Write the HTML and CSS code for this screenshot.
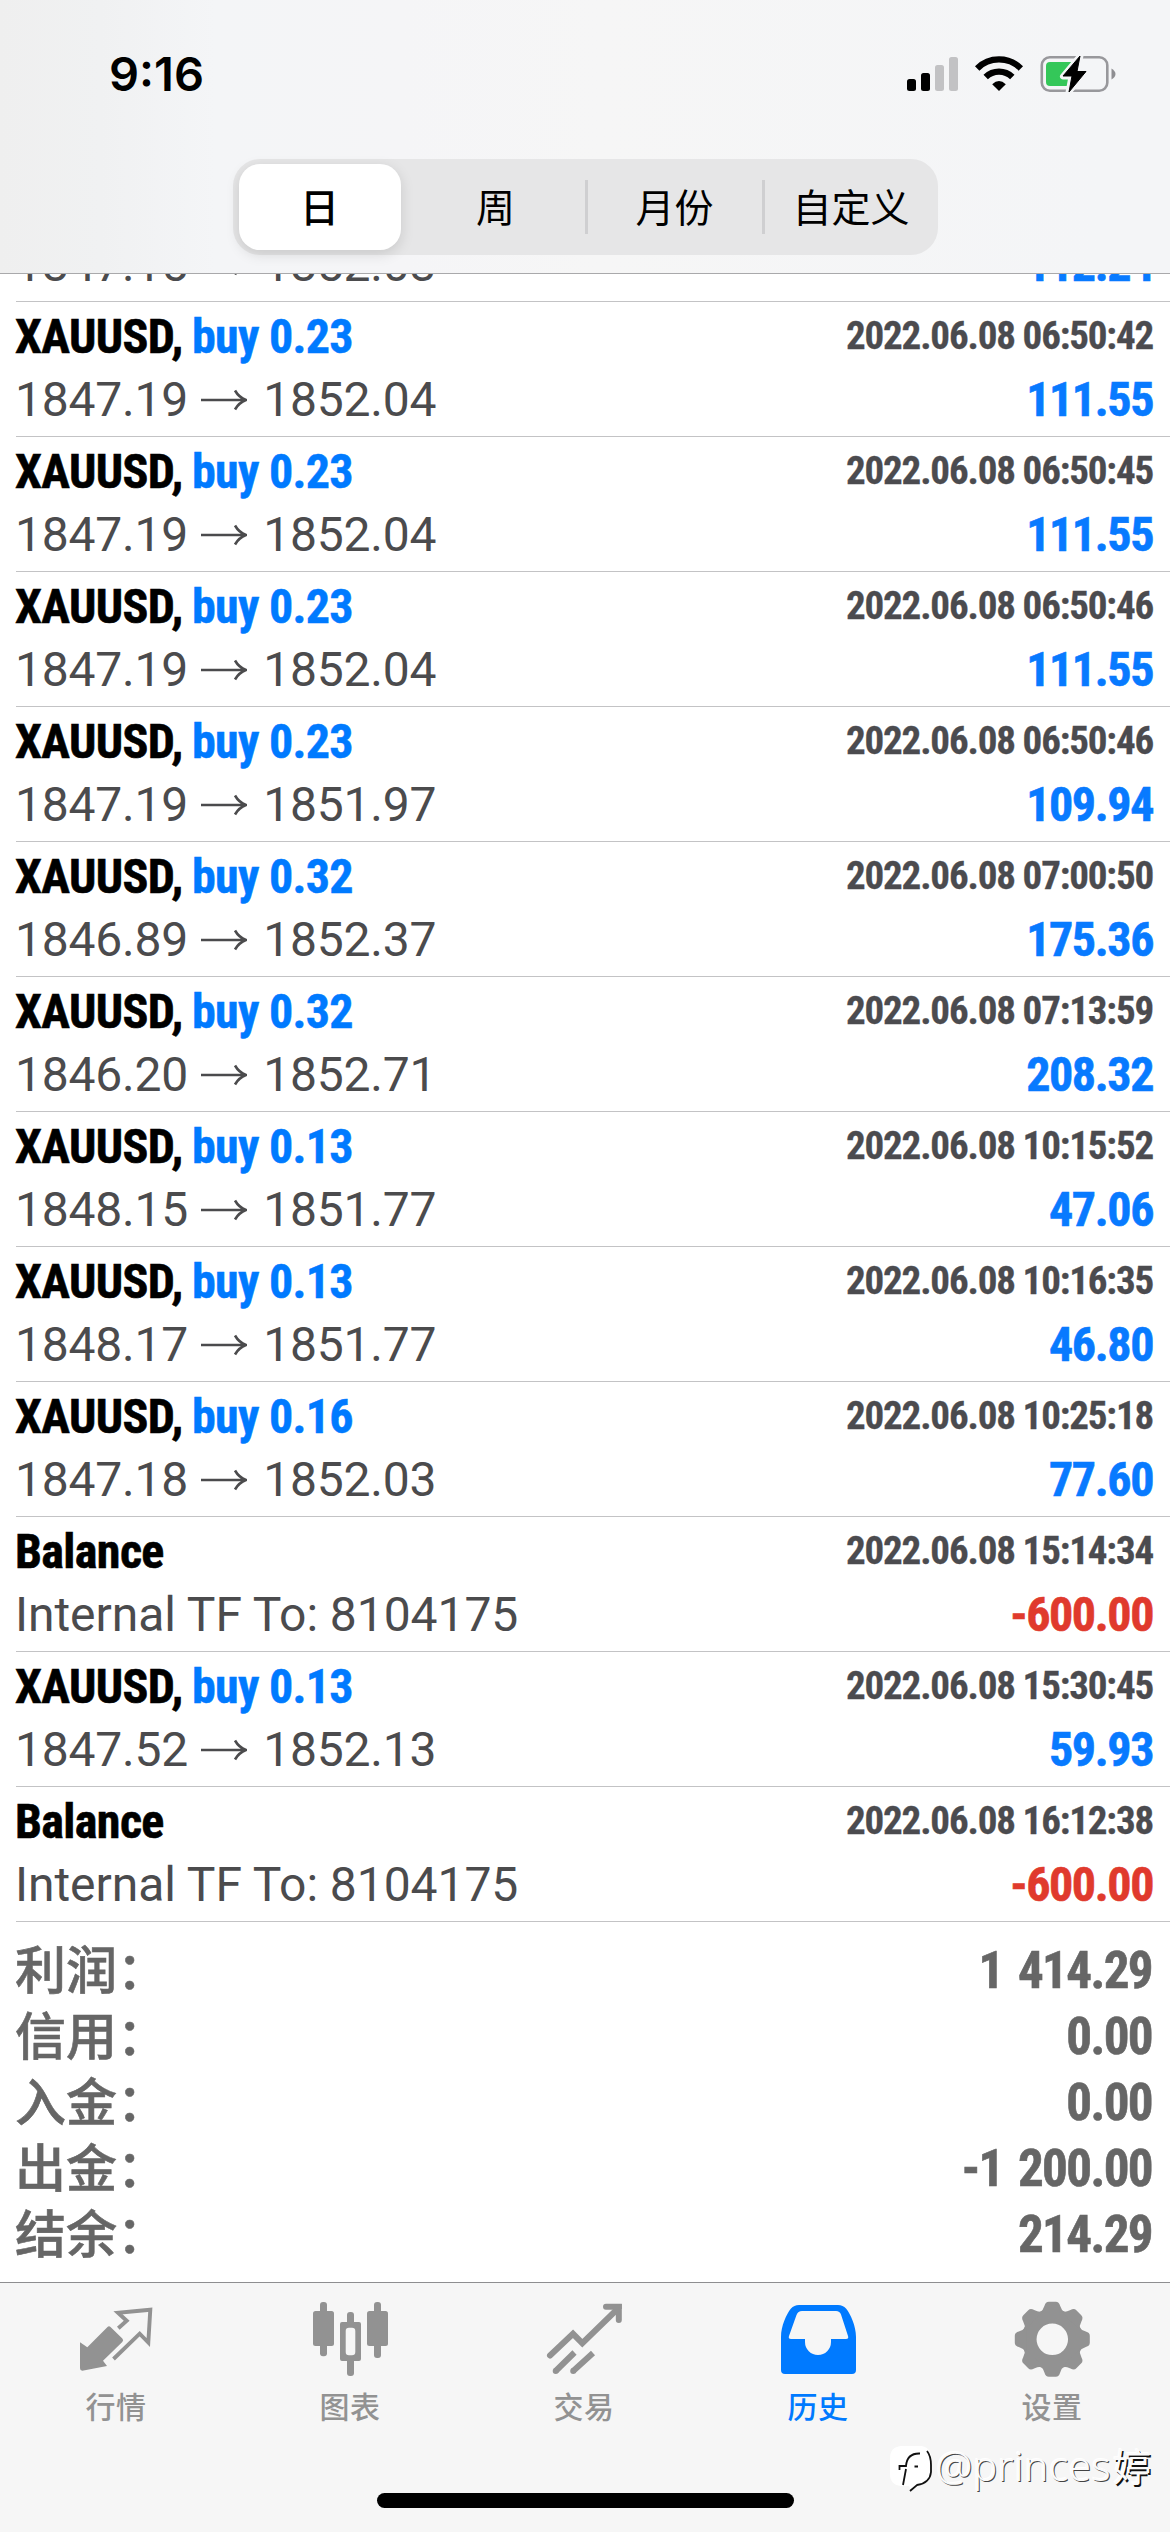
FILE: index.html
```html
<!DOCTYPE html>
<html lang="zh-CN">
<head>
<meta charset="utf-8">
<title>历史</title>
<link rel="stylesheet" href="styles.css">
</head>
<body>
<svg width="0" height="0" class="defs">
  <symbol id="arrow" viewBox="0 0 46 24"><path d="M0 12H45M34 2.500Q38 9.500 45 12Q38 14.500 34 21.500" fill="none" stroke="currentColor" stroke-width="2.600"/></symbol>
</svg>
<div class="screen">
  <header class="top">
    <div class="status">
      <span class="clock">9:16</span>
      <svg class="status-icons" width="210" height="40" viewBox="906 54 210 40">
        <g><rect x="907" y="79" width="9" height="12" rx="2.500"/><rect x="921" y="73" width="9" height="18" rx="2.500"/></g>
        <g fill="#c2c2c4"><rect x="935" y="65" width="9" height="26" rx="2.500"/><rect x="949" y="57" width="9" height="34" rx="2.500"/></g>
        <g fill="none" stroke="#000" stroke-width="6.300"><path d="M977.200 68.400A31 31 0 0 1 1020.800 68.400"/><path d="M985.700 77A19 19 0 0 1 1012.300 77"/></g>
        <path d="M999 91L992.200 84.200Q999 78 1005.800 84.200Z"/>
        <rect x="1041.800" y="57.300" width="65.500" height="33.400" rx="8" fill="none" stroke="#98989c" stroke-width="2.600"/>
        <path d="M1111.500 68.500Q1115.500 71 1115.500 74T1111.500 79.500Z" fill="#8e8e92"/>
        <path d="M1050 62H1071V86H1050Q1046 86 1046 82V66Q1046 62 1050 62Z" fill="#34c759"/>
        <path d="M1080.500 55.500L1063 76.500H1071.500L1068.500 92.500L1086 71H1077.500Z" stroke="#f4f5f7" stroke-width="6" stroke-linejoin="round"/>
        <path d="M1080 56L1063 76H1072L1069 92L1086 71.500H1077Z" stroke="#000" stroke-width="1" stroke-linejoin="round"/>
      </svg>
    </div>
    <div class="segments">
      <div class="segment selected">日</div>
      <div class="segment next">周</div>
      <div class="segment divided">月份</div>
      <div class="segment divided">自定义</div>
    </div>
  </header>

  <main class="content">
    <div class="row cut">
      <div class="line detail"><span class="prices">1847.15<svg class="arrow"><use href="#arrow"/></svg>1852.03</span><span class="amount">112.24</span></div>
    </div>
    <div class="row">
      <div class="line"><span class="title">XAUUSD,</span><span class="side">buy 0.23</span><span class="date">2022.06.08 06:50:42</span></div>
      <div class="line detail"><span class="prices">1847.19<svg class="arrow"><use href="#arrow"/></svg>1852.04</span><span class="amount">111.55</span></div>
    </div>
    <div class="row">
      <div class="line"><span class="title">XAUUSD,</span><span class="side">buy 0.23</span><span class="date">2022.06.08 06:50:45</span></div>
      <div class="line detail"><span class="prices">1847.19<svg class="arrow"><use href="#arrow"/></svg>1852.04</span><span class="amount">111.55</span></div>
    </div>
    <div class="row">
      <div class="line"><span class="title">XAUUSD,</span><span class="side">buy 0.23</span><span class="date">2022.06.08 06:50:46</span></div>
      <div class="line detail"><span class="prices">1847.19<svg class="arrow"><use href="#arrow"/></svg>1852.04</span><span class="amount">111.55</span></div>
    </div>
    <div class="row">
      <div class="line"><span class="title">XAUUSD,</span><span class="side">buy 0.23</span><span class="date">2022.06.08 06:50:46</span></div>
      <div class="line detail"><span class="prices">1847.19<svg class="arrow"><use href="#arrow"/></svg>1851.97</span><span class="amount">109.94</span></div>
    </div>
    <div class="row">
      <div class="line"><span class="title">XAUUSD,</span><span class="side">buy 0.32</span><span class="date">2022.06.08 07:00:50</span></div>
      <div class="line detail"><span class="prices">1846.89<svg class="arrow"><use href="#arrow"/></svg>1852.37</span><span class="amount">175.36</span></div>
    </div>
    <div class="row">
      <div class="line"><span class="title">XAUUSD,</span><span class="side">buy 0.32</span><span class="date">2022.06.08 07:13:59</span></div>
      <div class="line detail"><span class="prices">1846.20<svg class="arrow"><use href="#arrow"/></svg>1852.71</span><span class="amount">208.32</span></div>
    </div>
    <div class="row">
      <div class="line"><span class="title">XAUUSD,</span><span class="side">buy 0.13</span><span class="date">2022.06.08 10:15:52</span></div>
      <div class="line detail"><span class="prices">1848.15<svg class="arrow"><use href="#arrow"/></svg>1851.77</span><span class="amount">47.06</span></div>
    </div>
    <div class="row">
      <div class="line"><span class="title">XAUUSD,</span><span class="side">buy 0.13</span><span class="date">2022.06.08 10:16:35</span></div>
      <div class="line detail"><span class="prices">1848.17<svg class="arrow"><use href="#arrow"/></svg>1851.77</span><span class="amount">46.80</span></div>
    </div>
    <div class="row">
      <div class="line"><span class="title">XAUUSD,</span><span class="side">buy 0.16</span><span class="date">2022.06.08 10:25:18</span></div>
      <div class="line detail"><span class="prices">1847.18<svg class="arrow"><use href="#arrow"/></svg>1852.03</span><span class="amount">77.60</span></div>
    </div>
    <div class="row">
      <div class="line"><span class="title">Balance</span><span class="date">2022.06.08 15:14:34</span></div>
      <div class="line detail"><span class="prices note">Internal TF To: 8104175</span><span class="amount loss">-600.00</span></div>
    </div>
    <div class="row">
      <div class="line"><span class="title">XAUUSD,</span><span class="side">buy 0.13</span><span class="date">2022.06.08 15:30:45</span></div>
      <div class="line detail"><span class="prices">1847.52<svg class="arrow"><use href="#arrow"/></svg>1852.13</span><span class="amount">59.93</span></div>
    </div>
    <div class="row">
      <div class="line"><span class="title">Balance</span><span class="date">2022.06.08 16:12:38</span></div>
      <div class="line detail"><span class="prices note">Internal TF To: 8104175</span><span class="amount loss">-600.00</span></div>
    </div>

    <div class="totals">
      <div class="total"><span class="label">利润：</span><span>1 414.29</span></div>
      <div class="total"><span class="label">信用：</span><span>0.00</span></div>
      <div class="total"><span class="label">入金：</span><span>0.00</span></div>
      <div class="total"><span class="label">出金：</span><span>-1 200.00</span></div>
      <div class="total"><span class="label">结余：</span><span>214.29</span></div>
    </div>
  </main>

  <footer class="bottom">
    <nav class="tabs">
      <div class="tab">
        <svg width="84" height="78" viewBox="0 0 84 78"><path d="M5 42.300L12.300 47.300L32.500 27Q34 25.500 35.500 27L47.300 38.500Q49 40.300 47.300 42L28 60.700L32 66L7.300 70.700Q5 70.700 5 68.300Z" fill="currentColor"/><path d="M43.300 28.300L51.700 20.700L43 12.700L75.300 9.700L73.300 42.500L64.700 33.700L38.500 59" fill="none" stroke="currentColor" stroke-width="3.900"/></svg>
        <span>行情</span>
      </div>
      <div class="tab">
        <svg width="84" height="78" viewBox="0 0 84 78" fill="currentColor"><rect x="11" y="2" width="7" height="54.300" rx="3"/><rect x="4" y="11" width="21" height="35" rx="2.500"/><rect x="65" y="2" width="7" height="56" rx="3"/><rect x="58" y="11" width="21" height="35" rx="2.500"/><rect x="38" y="12" width="7" height="14" rx="3"/><rect x="38" y="58" width="7" height="18" rx="3"/><path fill-rule="evenodd" d="M33 22H50Q52 22 52 24V59Q52 61 50 61H33Q31 61 31 59V24Q31 22 33 22ZM40 27.700Q36.700 27.700 36.700 31V52Q36.700 55.300 40 55.300H43Q46.300 55.300 46.300 52V31Q46.300 27.700 43 27.700Z"/></svg>
        <span>图表</span>
      </div>
      <div class="tab">
        <svg width="84" height="78" viewBox="0 0 84 78" fill="none" stroke="currentColor" stroke-width="6"><path d="M7 55.500L30 33.800L39.300 43.200L75 8.500" stroke-linecap="round"/><path d="M63 6.800H75.800V20" stroke-linecap="round"/><path d="M73 4H78.800V9H73Z" fill="currentColor" stroke="none"/><path d="M12.700 71L31.500 52.500M30.200 71L50 53"/><path d="M12.700 71v.01M30.200 71v.01" stroke-linecap="round"/></svg>
        <span>交易</span>
      </div>
      <div class="tab active">
        <svg width="84" height="78" viewBox="0 0 84 78" fill="currentColor"><path fill-rule="evenodd" d="M4 70V37C4 26 9.500 14 14 8.500Q17 5 22 5H61Q66 5 69 8.500C73.500 14 79 26 79 37V70Q79 74 75 74H8Q4 74 4 70ZM25 11Q21 11 19.500 15L12 36Q11 39 14 39H28V42A13 13 0 0 0 54 42V39H69Q72 39 71 36L64 14.500Q62.800 11 59 11Z"/></svg>
        <span>历史</span>
      </div>
      <div class="tab">
        <svg width="84" height="78" viewBox="0 0 84 78"><g transform="translate(41.300 39.300)" fill="currentColor"><circle r="23" fill="none" stroke="currentColor" stroke-width="14.500"/><path id="cog" d="M-13-26Q-9-29-7.800-33.500Q-6.700-37.500-3.500-37.500H3.500Q6.700-37.500 7.800-33.500Q9-29 13-26Z"/><use href="#cog" transform="rotate(45)"/><use href="#cog" transform="rotate(90)"/><use href="#cog" transform="rotate(135)"/><use href="#cog" transform="rotate(180)"/><use href="#cog" transform="rotate(225)"/><use href="#cog" transform="rotate(270)"/><use href="#cog" transform="rotate(315)"/></g></svg>
        <span>设置</span>
      </div>
    </nav>
    <div class="home"></div>
    <div class="watermark">
      <svg width="46" height="50" viewBox="0 0 46 50"><path d="M12 1H32Q43 2 43 18V27Q42 38 28 40L22 46L20 41H12Q1 40 1 29V13Q1 2 12 1Z" fill="#fff"/><g fill="none" stroke="#111" stroke-width="1.800"><path d="M38 6Q42 11 42 20V27Q41 38 28 40L21 46"/><path d="M31 8.500Q18 8 17 21H10.500V25M17 24L14 40M25.500 21.500H29"/></g></svg>
      <span class="handle">@princes<b>婷</b></span>
    </div>
  </footer>
</div>
</body>
</html>
```
FILE: styles.css
```css
* { box-sizing: border-box; }
body { margin: 0; background: #fff; }
.defs { position: absolute; }

.screen {
  width: 1170px;
  height: 2532px;
  display: flex;
  flex-direction: column;
  overflow: hidden;
  background: #fff;
  font-family: Roboto, "Noto Sans CJK SC", sans-serif;
}

.top {
  height: 274px;
  display: flex;
  flex-direction: column;
  align-items: center;
  border-bottom: 1px solid #a9a9ab;
  background: linear-gradient(90deg, #efefef 0, #f0f1f2 100px, #f4f5f7 215px, #f5f5f7 400px, #f6f6f6 600px, #f4f5f7 1100px);
}
.status {
  width: 100%;
  height: 159px;
  padding: 54px 54px 0 109px;
  display: flex;
  justify-content: space-between;
  align-items: flex-start;
}
.clock {
  font: 600 47px/40px Inter, sans-serif;
}
.segments {
  width: 705px;
  height: 96px;
  padding: 5px 0 5px 6px;
  display: grid;
  grid-template-columns: 162px 184px 177px 1fr;
  border-radius: 27px;
  background: #e6e6e7;
  font: 400 39px/82px "Noto Sans CJK SC", sans-serif;
}
.segment { display: flex; justify-content: center; }
.segment.selected {
  border-radius: 21px;
  background: #fff;
  font-weight: 500;
  box-shadow: 0 4px 14px rgba(0, 0, 0, .13);
}
.segment.next { padding-left: 6px; }
.segment.divided {
  padding-left: 3px;
  background: linear-gradient(#cfcfd1, #cfcfd1) 0 16px / 3px 54px no-repeat;
}

.content { flex: 1; }
.row {
  height: 135px;
  margin-left: 16px;
  padding: 5px 17px 4px 0;
  border-bottom: 1px solid #c3c3c5;
}
.row.cut {
  height: 28px;
  padding-top: 0;
  display: flex;
  flex-direction: column;
  justify-content: flex-end;
  overflow: hidden;
}
.line {
  height: 60px;
  display: flex;
  align-items: flex-start;
  font: 700 48px/60px Roboto, sans-serif;
  font-stretch: 75%;
  white-space: nowrap;
}
.line.detail { height: 65px; line-height: 65px; flex: none; }
.title {
  width: 177px;
  margin-left: -1px;
  letter-spacing: -.6px;
  color: #000;
  -webkit-text-stroke: .6px;
}
.side { letter-spacing: -.7px; color: #007aff; -webkit-text-stroke: .5px; }
.date {
  margin-left: auto;
  font-size: 39px;
  line-height: 59px;
  letter-spacing: -1.15px;
  color: #4b4b4f;
  -webkit-text-stroke: .3px;
}
.prices {
  margin-left: -1px;
  display: flex;
  align-items: center;
  font-weight: 400;
  font-stretch: 100%;
  letter-spacing: -.2px;
  color: #4b4b4d;
}
.prices.note { letter-spacing: -.05px; }
.arrow { width: 46px; height: 24px; margin: 1px 16px 0 13px; }
.amount {
  margin-left: auto;
  letter-spacing: -1.4px;
  color: #087aff;
  -webkit-text-stroke: .6px;
}
.amount.loss { color: #e03a2d; }

.totals { padding: 16px 18px 0 15px; color: #666; }
.total {
  height: 66px;
  display: flex;
  justify-content: space-between;
  font: 700 51px/66px Roboto, sans-serif;
  font-stretch: 75%;
  letter-spacing: -1.6px;
  word-spacing: 5px;
  -webkit-text-stroke: .6px;
}
.label {
  font: 500 51px/58px "Noto Sans CJK SC", sans-serif;
  letter-spacing: 0;
}

.bottom {
  position: relative;
  height: 250px;
  display: flex;
  flex-direction: column;
  align-items: center;
  border-top: 1px solid #8e8e90;
  background: #f6f6f6;
}
.tabs {
  width: 100%;
  height: 210px;
  padding-top: 17px;
  display: grid;
  grid-template-columns: repeat(5, 1fr);
  color: #929292;
}
.tab {
  display: flex;
  flex-direction: column;
  align-items: center;
  font: 500 30px/40px "Noto Sans CJK SC", sans-serif;
  letter-spacing: .6px;
}
.tab span { margin: 7px 2px 0 0; }
.tab.active { color: #007aff; }
.home { width: 417px; height: 15px; border-radius: 8px; background: #000; }

.watermark {
  position: absolute;
  right: 8px;
  top: 162px;
  display: flex;
  width: 273px;
}
.handle {
  margin: -5px 0 0 1px;
  font: 300 41px/50px "Noto Sans", sans-serif;
  letter-spacing: .3px;
  color: #fbfbfb;
  white-space: nowrap;
  text-shadow: 1px 1px 0 #444, -1px -1px 0 #fff;
}
.handle b {
  margin-left: 2px;
  font: 400 38px/50px "Noto Sans CJK SC", sans-serif;
  text-shadow: 1.5px 1.5px 0 #111, -1px -1px 0 #fff;
}
```
